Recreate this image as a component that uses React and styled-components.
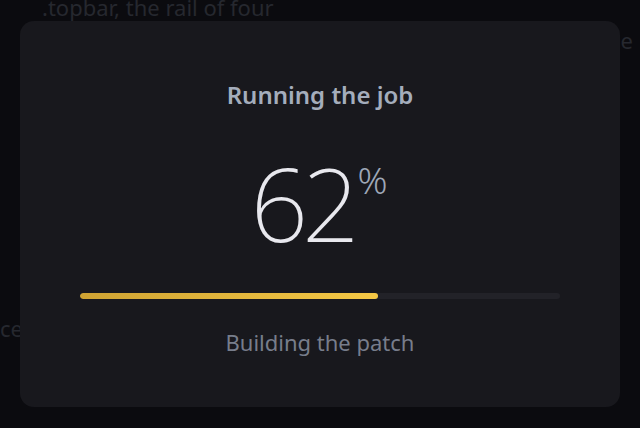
import React from "react";
import styled, { createGlobalStyle } from "styled-components";

const Global = createGlobalStyle`
  html, body { margin: 0; padding: 0; }
  body {
    background: #0d0d10;
    font-family: "Noto Sans", "Open Sans", sans-serif;
    overflow: hidden;
  }
`;

const Page = styled.div`
  width: 640px;
  height: 428px;
  overflow: hidden;
  position: relative;
  background: #0d0d10;
`;

const Doc = styled.div`
  margin-top: -9px;
  font-size: 22px;
  line-height: 32.5px;
  color: #30333b;
`;

const DocLine = styled.div`
  padding-left: ${(p) => p.$indent || 0}px;
  padding-right: ${(p) => p.$right || 0}px;
  text-align: ${(p) => p.$align || "left"};
  margin-top: ${(p) => p.$gap || 0}px;
  white-space: nowrap;
`;

const Overlay = styled.div`
  position: absolute;
  inset: 0;
  display: flex;
  align-items: center;
  justify-content: center;
  background: rgba(8, 8, 10, 0.25);
`;

const Modal = styled.div`
  width: 600px;
  box-sizing: border-box;
  padding: 62px 60px 54px;
  background: #18181d;
  border-radius: 14px;
  display: flex;
  flex-direction: column;
  align-items: center;
`;

const Title = styled.div`
  font-size: 24px;
  line-height: 24px;
  font-weight: 600;
  color: #a4adbc;
  margin-bottom: 44px;
`;

const Readout = styled.div`
  display: flex;
  align-items: flex-start;
  gap: 4px;
  margin-bottom: 38px;
  margin-right: 2px;
`;

const Number = styled.span`
  font-size: 101px;
  line-height: 104px;
  font-weight: 200;
  letter-spacing: -6px;
  color: #e8e8ee;
`;

const Unit = styled.span`
  font-size: 37px;
  line-height: 38px;
  font-weight: 300;
  color: #9ea7b7;
  margin-top: 10px;
`;

const Track = styled.div`
  width: 480px;
  height: 6px;
  border-radius: 3px;
  background: #222228;
  overflow: hidden;
  margin-bottom: 32px;
`;

const Fill = styled.div`
  height: 100%;
  border-radius: 3px;
  background: linear-gradient(90deg, #cfa333, #f5c845);
`;

const Status = styled.div`
  font-size: 22px;
  line-height: 22px;
  font-weight: 400;
  color: #777d8b;
`;

export default function App() {
  const pct = 62;
  return (
    <Page>
      <Global />
      <Doc>
        <DocLine $indent={42}>.topbar, the rail of four</DocLine>
        <DocLine $align="right" $right={7}>the row that holds the title and the close button, in one line</DocLine>
        <DocLine $gap={256}>ce</DocLine>
      </Doc>
      <Overlay>
        <Modal>
          <Title>Running the job</Title>
          <Readout>
            <Number>{pct}</Number>
            <Unit>%</Unit>
          </Readout>
          <Track>
            <Fill style={{ width: `${pct}%` }} />
          </Track>
          <Status>Building the patch</Status>
        </Modal>
      </Overlay>
    </Page>
  );
}
